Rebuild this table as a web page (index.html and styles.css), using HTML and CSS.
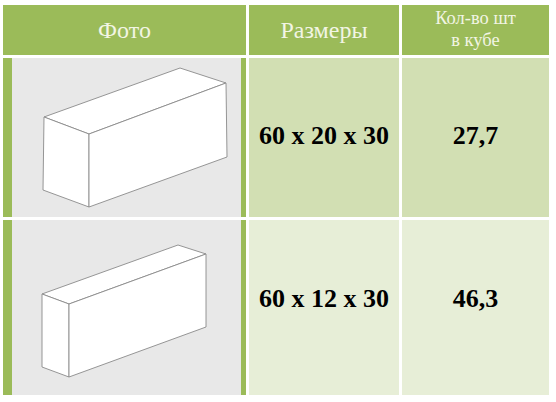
FILE: index.html
```html
<!DOCTYPE html>
<html lang="ru">
<head>
<meta charset="utf-8">
<link rel="stylesheet" href="styles.css">
</head>
<body>
<div class="grid">
  <div class="head"><span class="txt">Фото</span></div>
  <div class="head"><span class="txt">Размеры</span></div>
  <div class="head small"><span class="txt">Кол-во шт<br>в кубе</span></div>

  <div class="photo">
    <svg class="pic" viewBox="12 58 229 159" width="229" height="159">
      <polygon points="44,117 180,68 226,83 89,134" />
      <polygon points="44,117 89,134 89,207 43,190" />
      <polygon points="89,134 226,83 227,157 89,207" />
    </svg>
  </div>
  <div class="cell odd"><span class="val">60 x 20 x 30</span></div>
  <div class="cell odd"><span class="val">27,7</span></div>

  <div class="photo">
    <svg class="pic" viewBox="12 220 229 175" width="229" height="175">
      <polygon points="42,294 178,245 206,254 69,304" />
      <polygon points="42,294 69,304 69,377 42,367" />
      <polygon points="69,304 206,254 206,327 69,377" />
    </svg>
  </div>
  <div class="cell even low"><span class="val">60 x 12 x 30</span></div>
  <div class="cell even low"><span class="val">46,3</span></div>
</div>
</body>
</html>
```

FILE: styles.css
```css
body {
  margin: 0;
  background: #ffffff;
  font-family: "Liberation Serif", "Times New Roman", serif;
}
.grid {
  display: grid;
  grid-template-columns: 243px 150px 147px;
  grid-template-rows: 50px 159px 175px;
  gap: 3px;
  padding: 5px 0 0 3px;
  font-family: "Liberation Serif", "Times New Roman", serif;
}
.txt, .val {
  font-family: "Liberation Serif", "Times New Roman", serif;
}
.head {
  background: #9bbb59;
  color: #f2f5e4;
  font-size: 24px;
  display: flex;
  align-items: center;
  justify-content: center;
  text-align: center;
}
.small {
  font-size: 18.5px;
  line-height: 22px;
  padding-bottom: 2px;
}
.photo {
  background: #9bbb59;
  padding: 0 5px 0 9px;
  display: flex;
}
.pic {
  display: block;
  background: #e8e8e8;
}
.pic polygon {
  fill: #ffffff;
  stroke: #8a8a8a;
  stroke-width: 0.9;
  stroke-linejoin: round;
}
.cell {
  display: flex;
  align-items: center;
  justify-content: center;
  font-weight: bold;
  font-size: 26px;
  color: #000000;
}
.odd {
  background: #d2dfb3;
  padding-bottom: 4px;
}
.even {
  background: #e7eed7;
}
.low {
  padding-bottom: 18px;
}
```
